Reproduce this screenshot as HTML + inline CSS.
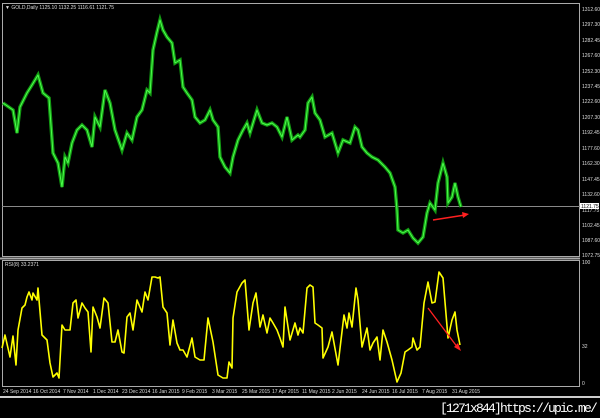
<!DOCTYPE html>
<html><head><meta charset="utf-8"><style>
html,body{margin:0;padding:0;background:#000;width:600px;height:418px;overflow:hidden;font-family:"Liberation Sans",sans-serif}
svg{position:absolute;left:0;top:0}
.t{font-family:"Liberation Sans",sans-serif;font-size:5px;fill:#ddd}
.wm{position:absolute;left:440px;top:401px;color:#fff;font-family:"Liberation Mono",monospace;font-size:13px;letter-spacing:-1.8px;line-height:15px}
</style></head><body>
<svg width="600" height="418" viewBox="0 0 600 418">
<rect x="2.5" y="3.5" width="577" height="253" fill="none" stroke="#aaa" stroke-width="1"/>
<line x1="0" y1="258.5" x2="580" y2="258.5" stroke="#aaa" stroke-width="2"/>
<rect x="2.5" y="260.5" width="577" height="126" fill="none" stroke="#aaa" stroke-width="1"/>
<line x1="0" y1="397" x2="600" y2="397" stroke="#ccc" stroke-width="2"/>
<line x1="2" y1="206.5" x2="580" y2="206.5" stroke="#888" stroke-width="1"/>
<text x="5" y="9" class="t">▼ GOLD,Daily  1125.10 1132.25 1116.61 1121.75</text>
<text x="5" y="266" class="t">RSI(8) 33.2371</text>
<g class="t">
<text x="582" y="11">1312.60</text><text x="582" y="26">1297.30</text><text x="582" y="42">1282.45</text><text x="582" y="57">1267.60</text><text x="582" y="73">1252.30</text><text x="582" y="88">1237.45</text><text x="582" y="103">1222.60</text><text x="582" y="119">1207.30</text><text x="582" y="134">1192.45</text><text x="582" y="150">1177.60</text><text x="582" y="165">1162.30</text><text x="582" y="181">1147.45</text><text x="582" y="196">1132.60</text><text x="582" y="212">1117.75</text><text x="582" y="227">1102.45</text><text x="582" y="242">1087.60</text><text x="582" y="257">1072.75</text>
<text x="582" y="264">100</text><text x="582" y="348">32</text><text x="582" y="385">0</text>
</g>
<rect x="580" y="203" width="19" height="6" fill="#fff"/>
<text x="581" y="208" class="t" style="fill:#000">1121.75</text>
<g class="t">
<text x="3" y="393">24 Sep 2014</text><text x="33" y="393">16 Oct 2014</text><text x="63" y="393">7 Nov 2014</text><text x="93" y="393">1 Dec 2014</text><text x="122" y="393">23 Dec 2014</text><text x="152" y="393">16 Jan 2015</text><text x="182" y="393">9 Feb 2015</text><text x="212" y="393">3 Mar 2015</text><text x="242" y="393">25 Mar 2015</text><text x="272" y="393">17 Apr 2015</text><text x="302" y="393">11 May 2015</text><text x="332" y="393">2 Jun 2015</text><text x="362" y="393">24 Jun 2015</text><text x="392" y="393">16 Jul 2015</text><text x="422" y="393">7 Aug 2015</text><text x="452" y="393">31 Aug 2015</text>
</g>
<g fill="none" stroke-linejoin="round">
<polyline stroke="#139a13" stroke-width="3.5" stroke-linejoin="miter" points="3,103 13,110 17,133 20,107 27,93 32,85 38,75 43,93 49,98 53,153 58,163 62,187 65,157 68,163 72,143 77,130 82,125 87,130 92,147 95,117 100,127 105,90 110,103 115,130 122,150 127,133 132,140 137,117 142,110 147,90 150,93 153,50 157,32 160,20 163,30 167,37 172,43 175,63 180,60 183,87 187,93 192,100 195,117 200,123 205,120 210,110 213,120 218,127 220,157 225,167 230,173 233,157 238,140 243,130 247,123 250,133 257,110 262,123 267,125 272,123 277,127 282,137 287,117 292,140 298,135 300,137 305,130 308,103 312,97 315,113 320,120 325,137 332,133 338,153 343,140 350,143 355,127 358,130 362,147 367,153 372,157 378,160 385,167 390,173 395,187 397,210 398,230 403,233 408,230 413,238 418,243 423,237 427,213 430,203 435,210 438,183 443,163 447,177 448,203 452,197 455,183 458,197 461,207"/>
<polyline stroke="#4cff4c" stroke-width="1" points="3,103 13,110 17,133 20,107 27,93 32,85 38,75 43,93 49,98 53,153 58,163 62,187 65,157 68,163 72,143 77,130 82,125 87,130 92,147 95,117 100,127 105,90 110,103 115,130 122,150 127,133 132,140 137,117 142,110 147,90 150,93 153,50 157,32 160,20 163,30 167,37 172,43 175,63 180,60 183,87 187,93 192,100 195,117 200,123 205,120 210,110 213,120 218,127 220,157 225,167 230,173 233,157 238,140 243,130 247,123 250,133 257,110 262,123 267,125 272,123 277,127 282,137 287,117 292,140 298,135 300,137 305,130 308,103 312,97 315,113 320,120 325,137 332,133 338,153 343,140 350,143 355,127 358,130 362,147 367,153 372,157 378,160 385,167 390,173 395,187 397,210 398,230 403,233 408,230 413,238 418,243 423,237 427,213 430,203 435,210 438,183 443,163 447,177 448,203 452,197 455,183 458,197 461,207"/>
<polyline stroke="#ffff00" stroke-width="1.6" points="2,348 5,335 10,357 13,336 16,365 18,330 22,308 25,305 27,297 29,292 32,300 33,293 37,300 38,288 42,335 47,340 50,363 53,377 57,373 59,378 62,325 65,330 70,330 73,303 76,300 78,318 82,303 85,308 88,312 91,352 93,307 97,317 100,328 104,298 108,303 112,342 115,342 118,330 122,352 124,353 127,317 130,313 133,330 137,300 142,312 145,292 148,300 152,277 155,277 158,278 160,277 163,307 167,313 170,345 173,320 177,343 180,350 183,350 187,357 192,338 195,357 200,360 204,360 208,318 213,342 218,375 223,378 227,378 229,362 232,368 233,318 237,292 242,283 245,280 249,330 253,303 256,293 260,327 263,315 267,333 270,318 273,323 277,330 280,338 283,347 285,307 290,340 295,323 298,335 300,328 303,333 307,288 310,285 313,287 315,323 318,325 322,328 323,358 328,347 332,332 338,365 344,315 347,328 349,313 352,327 356,288 358,300 362,347 367,328 370,350 373,343 377,337 380,360 383,330 387,342 392,360 397,382 401,373 405,352 408,350 412,347 413,338 417,350 420,347 424,303 428,282 432,303 435,302 439,272 443,278 448,338 452,320 455,312 457,330 460,345"/>
<line x1="428" y1="308" x2="458" y2="348" stroke="#ff2020" stroke-width="1.3"/>
<line x1="433" y1="220" x2="465" y2="215" stroke="#ff2020" stroke-width="1.5"/>
</g>
<polygon points="461,351 454,347 458,343" fill="#ff2020"/>
<polygon points="469,214 462,212 463,218" fill="#ff2020"/>
</svg>
<div class="wm">[1271x844]https://upic.me/</div>
</body></html>
